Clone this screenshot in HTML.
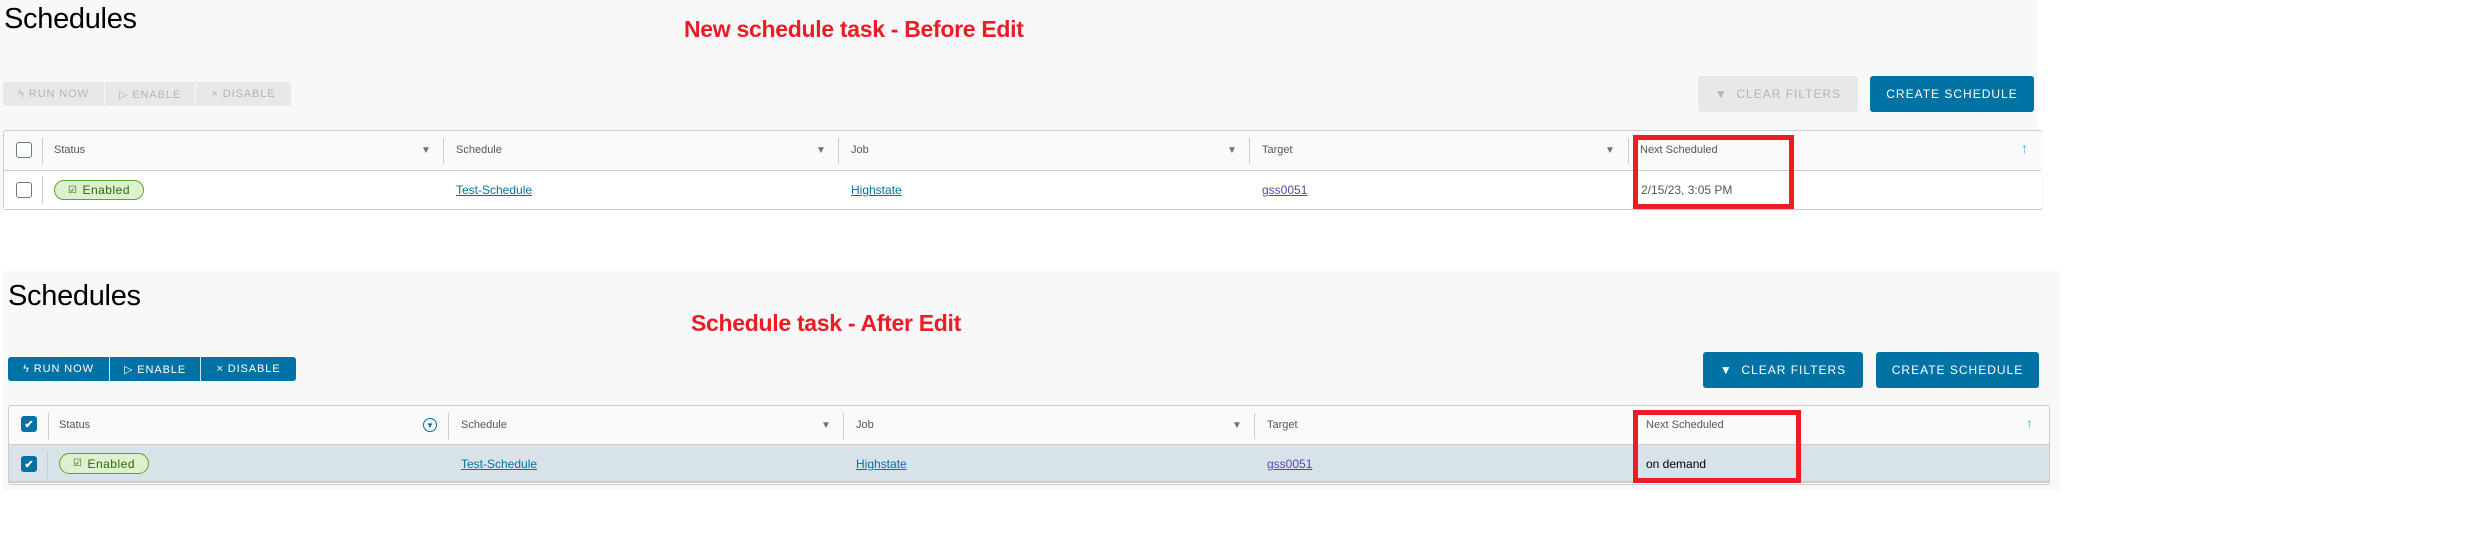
<!DOCTYPE html>
<html><head><meta charset="utf-8"><style>
*{margin:0;padding:0;box-sizing:border-box}
body{width:2492px;height:540px;background:#fff;position:relative;overflow:hidden;font-family:"Liberation Sans",sans-serif;color:#565656}
.a{position:absolute}
.panel{background:#f8f8f8}
.title{font-size:29px;color:#000;font-weight:300;letter-spacing:-0.3px}
.red{color:#ed1c24;font-weight:bold;font-size:23px;letter-spacing:-0.3px}
.bg{display:flex;border-radius:3px;overflow:hidden;font-size:11px;letter-spacing:0.9px}
.bg div{display:flex;align-items:center;justify-content:center;height:100%}
.btn{border-radius:3px;display:flex;align-items:center;justify-content:center;font-size:12px;letter-spacing:1px}
.tbl{border:1px solid #ccc;border-radius:3px;background:#fafafa}
.hd{font-size:11px;color:#565656}
.sep{width:1px;background:#ccc}
.cb{width:16px;height:16px;border:1px solid #6a7a85;border-radius:3px;background:#fff}
.cbc{width:16px;height:16px;border-radius:3px;background:#0072a3;color:#fff;font-size:11px;display:flex;align-items:center;justify-content:center;font-weight:bold}
.badge{border:1px solid #62a420;background:#dff0d0;border-radius:11px;color:#266900;font-size:12px;display:flex;align-items:center;justify-content:center;gap:5px;letter-spacing:0.5px;font-weight:normal}
.lk{font-size:12px;color:#0072a3;text-decoration:underline}
.lv{font-size:12px;color:#5a45b0;text-decoration:underline}
.fi{font-size:10px;color:#737373}
.rb{border:5px solid #ed1c24}
</style></head><body>

<!-- TOP -->
<div class="a panel" style="left:0;top:0;width:2037px;height:210px"></div>
<div class="a title" style="left:4px;top:3px">Schedules</div>
<div class="a red" style="left:684px;top:16px">New schedule task - Before Edit</div>
<div class="a bg" style="left:3px;top:82px;width:288px;height:24px;background:#e8e8e8;color:#b3b3b3">
 <div style="width:102px;border-right:1px solid #f8f8f8">ϟ RUN NOW</div>
 <div style="width:91px;border-right:1px solid #f8f8f8">▷ ENABLE</div>
 <div style="flex:1">× DISABLE</div>
</div>
<div class="a btn" style="left:1698px;top:76px;width:160px;height:36px;background:#e8e8e8;color:#b3b3b3">▼&nbsp; CLEAR FILTERS</div>
<div class="a btn" style="left:1870px;top:76px;width:164px;height:36px;background:#0072a3;color:#fff">CREATE SCHEDULE</div>

<div class="a tbl" style="left:3px;top:130px;width:2040px;height:80px;border-right:none"></div>
<div class="a" style="left:4px;top:170px;width:2037px;height:39px;background:#fff;border-top:1px solid #ccc"></div>
<div class="a cb" style="left:16px;top:142px"></div>
<div class="a cb" style="left:16px;top:182px"></div>
<div class="a sep" style="left:42px;top:138px;height:26px"></div>
<div class="a sep" style="left:42px;top:176px;height:28px"></div>
<div class="a sep" style="left:443px;top:138px;height:26px"></div>
<div class="a sep" style="left:838px;top:138px;height:26px"></div>
<div class="a sep" style="left:1249px;top:138px;height:26px"></div>
<div class="a sep" style="left:1628px;top:138px;height:26px"></div>
<div class="a hd" style="left:54px;top:144px">Status</div>
<div class="a hd" style="left:456px;top:144px">Schedule</div>
<div class="a hd" style="left:851px;top:144px">Job</div>
<div class="a hd" style="left:1262px;top:144px">Target</div>
<div class="a hd" style="left:1640px;top:144px">Next Scheduled</div>
<div class="a fi" style="left:421px;top:145px">▼</div>
<div class="a fi" style="left:816px;top:145px">▼</div>
<div class="a fi" style="left:1227px;top:145px">▼</div>
<div class="a fi" style="left:1605px;top:145px">▼</div>
<div class="a" style="left:2021px;top:140px;color:#49afd9;font-size:14px">↑</div>
<div class="a badge" style="left:54px;top:180px;width:90px;height:20px"><span style="font-size:10px">☑</span>Enabled</div>
<div class="a lk" style="left:456px;top:183px">Test-Schedule</div>
<div class="a lk" style="left:851px;top:183px">Highstate</div>
<div class="a lv" style="left:1262px;top:183px">gss0051</div>
<div class="a" style="left:1641px;top:183px;font-size:12px;color:#565656">2/15/23, 3:05 PM</div>
<div class="a rb" style="left:1633px;top:135px;width:161px;height:74px"></div>

<!-- BOTTOM -->
<div class="a panel" style="left:3px;top:271px;width:2057px;height:219px"></div>
<div class="a title" style="left:8px;top:280px">Schedules</div>
<div class="a red" style="left:691px;top:310px">Schedule task - After Edit</div>
<div class="a bg" style="left:8px;top:357px;width:288px;height:24px;background:#0072a3;color:#fff">
 <div style="width:102px;border-right:1px solid #d0e4ee">ϟ RUN NOW</div>
 <div style="width:91px;border-right:1px solid #d0e4ee">▷ ENABLE</div>
 <div style="flex:1">× DISABLE</div>
</div>
<div class="a btn" style="left:1703px;top:352px;width:160px;height:36px;background:#0072a3;color:#fff">▼&nbsp; CLEAR FILTERS</div>
<div class="a btn" style="left:1876px;top:352px;width:163px;height:36px;background:#0072a3;color:#fff">CREATE SCHEDULE</div>

<div class="a tbl" style="left:8px;top:405px;width:2042px;height:80px"></div>
<div class="a" style="left:9px;top:444px;width:2040px;height:39px;background:#d8e3e9;border-top:1px solid #ccc;border-bottom:2px solid #ccc"></div>
<div class="a cbc" style="left:21px;top:416px">✔</div>
<div class="a cbc" style="left:21px;top:456px">✔</div>
<div class="a sep" style="left:48px;top:413px;height:26px"></div>
<div class="a sep" style="left:47px;top:451px;height:28px"></div>
<div class="a sep" style="left:448px;top:413px;height:26px"></div>
<div class="a sep" style="left:843px;top:413px;height:26px"></div>
<div class="a sep" style="left:1254px;top:413px;height:26px"></div>
<div class="a hd" style="left:59px;top:419px">Status</div>
<div class="a hd" style="left:461px;top:419px">Schedule</div>
<div class="a hd" style="left:856px;top:419px">Job</div>
<div class="a hd" style="left:1267px;top:419px">Target</div>
<div class="a hd" style="left:1646px;top:419px">Next Scheduled</div>
<div class="a" style="left:423px;top:418px;width:14px;height:14px;border:1.5px solid #0072a3;border-radius:50%;color:#0072a3;font-size:8px;display:flex;align-items:center;justify-content:center">▼</div>
<div class="a fi" style="left:821px;top:420px">▼</div>
<div class="a fi" style="left:1232px;top:420px">▼</div>
<div class="a" style="left:2026px;top:415px;color:#49afd9;font-size:14px">↑</div>
<div class="a badge" style="left:59px;top:453px;width:90px;height:21px"><span style="font-size:10px">☑</span>Enabled</div>
<div class="a lk" style="left:461px;top:457px">Test-Schedule</div>
<div class="a lk" style="left:856px;top:457px">Highstate</div>
<div class="a lv" style="left:1267px;top:457px">gss0051</div>
<div class="a" style="left:1646px;top:457px;font-size:12px;color:#000">on demand</div>
<div class="a rb" style="left:1633px;top:410px;width:168px;height:73px"></div>

</body></html>
